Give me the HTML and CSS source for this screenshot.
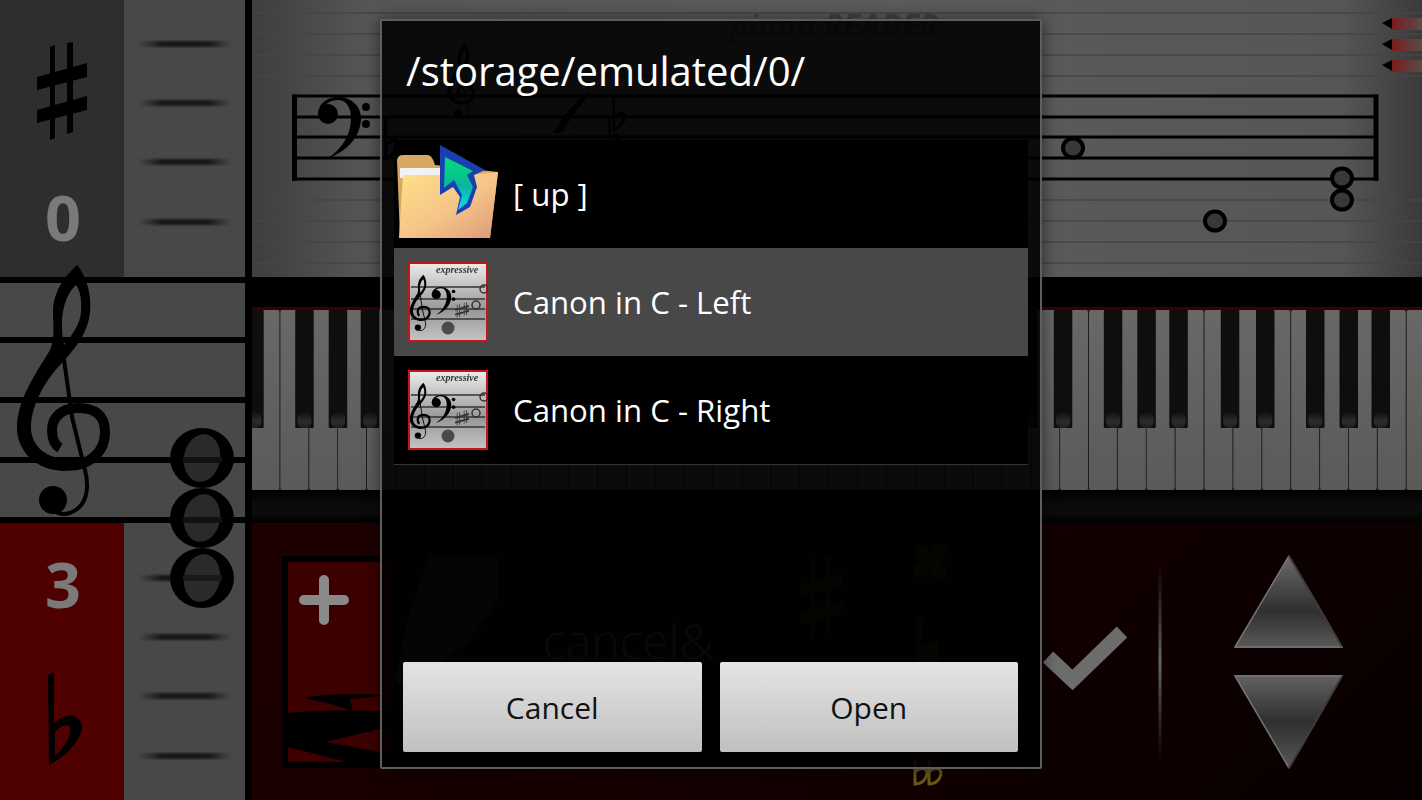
FILE: index.html
```html
<!DOCTYPE html>
<html lang="en">
<head>
<meta charset="utf-8">
<title>Open file</title>
<link rel="stylesheet" href="styles.css">
</head>
<body>
<svg class="defs" width="0" height="0" aria-hidden="true">
  <defs>
    <symbol id="treble" viewBox="0 260 120 262">
      <path fill-rule="evenodd" d="M77 265C86 275 92 295 90 312C88 335 72 352 60 365C44 382 32 405 31 425C30 445 45 458 66 459L66 471C35 471 17 450 17 428C17 400 35 375 50 350C55 340 53 325 53 310C54 290 66 275 77 265ZM76 285C68 292 63 305 62 320C62 330 62 338 64 345C72 335 80 325 81 312C82 300 80 290 76 285Z"/>
      <path fill="none" stroke="#000" stroke-width="10" d="M60 465C85 469 105 455 105 432C105 415 95 408 78 408C62 408 52 417 52 430C52 440 55 445 60 448"/>
      <path fill="none" stroke="#000" stroke-width="4" d="M62 345L72 417L85 470C90 490 86 506 72 512C66 515 60 514 56 512"/>
      <circle cx="53" cy="500" r="14"/>
    </symbol>
    <symbol id="bass" viewBox="316 95 58 66">
      <path d="M318 115C318 103 328 97 338 97C352 97 361 107 361 118C361 138 345 152 327 159C342 149 351 135 351 118C351 107 346 100 338 100C330 100 325 104 323 109Z"/>
      <circle cx="328" cy="114" r="10"/>
      <circle cx="366" cy="107" r="4"/>
      <circle cx="366" cy="124" r="4"/>
    </symbol>
    <symbol id="sharp" viewBox="0 0 50 98">
      <path d="M13 5L18 3V96L13 98ZM30 1L36 0V90L30 92ZM0 35L50 21V35L0 48ZM0 68L50 54V68L0 81Z"/>
    </symbol>
    <symbol id="flat" viewBox="0 0 34 94">
      <path fill-rule="evenodd" d="M0 3L6 0V52C12 45 20 42 26 44C33 47 36 55 32 63C26 76 13 87 1 93ZM7 60V84C15 77 23 66 22 56C20 50 12 54 7 60Z"/>
    </symbol>
    <linearGradient id="white-key" x1="0" y1="0" x2="0" y2="1">
      <stop offset="0" stop-color="#686868"/>
      <stop offset="1" stop-color="#5a5a58"/>
    </linearGradient>
    <linearGradient id="nub" x1="0" y1="0" x2="0" y2="1">
      <stop offset="0" stop-color="#111"/>
      <stop offset=".6" stop-color="#2c2c2c"/>
      <stop offset="1" stop-color="#1e1e1e"/>
    </linearGradient>
    <linearGradient id="tri" x1="0" y1="0" x2="0" y2="1">
      <stop offset="0" stop-color="#6c6c6c"/>
      <stop offset=".6" stop-color="#2f2f2f"/>
      <stop offset="1" stop-color="#5a5a5a"/>
    </linearGradient>
    <linearGradient id="tri-down" x1="0" y1="0" x2="0" y2="1">
      <stop offset="0" stop-color="#626262"/>
      <stop offset=".5" stop-color="#2f2f2f"/>
      <stop offset="1" stop-color="#585858"/>
    </linearGradient>
    <linearGradient id="fade-line" x1="0" y1="0" x2="0" y2="1">
      <stop offset="0" stop-color="#555" stop-opacity="0"/>
      <stop offset=".5" stop-color="#666"/>
      <stop offset="1" stop-color="#555" stop-opacity="0"/>
    </linearGradient>
    <linearGradient id="marker" x1="0" y1="0" x2="1" y2="0">
      <stop offset="0" stop-color="#7a1c1c"/>
      <stop offset="1" stop-color="#5a4a4a"/>
    </linearGradient>
    <linearGradient id="folder" x1="0" y1="0" x2="1" y2="1">
      <stop offset="0" stop-color="#ffe18a"/>
      <stop offset=".55" stop-color="#f4c487"/>
      <stop offset="1" stop-color="#dd9a78"/>
    </linearGradient>
    <linearGradient id="up-arrow" x1="0" y1="0" x2="0" y2="1">
      <stop offset="0" stop-color="#00e070"/>
      <stop offset=".55" stop-color="#0ab5a0"/>
      <stop offset="1" stop-color="#10d8f0"/>
    </linearGradient>
    <linearGradient id="sheet" x1="0" y1="0" x2="0" y2="1">
      <stop offset="0" stop-color="#ececec"/>
      <stop offset=".6" stop-color="#979797"/>
      <stop offset="1" stop-color="#c4c4c4"/>
    </linearGradient>
    <symbol id="file-icon" viewBox="0 0 80 80">
      <rect x="1" y="1" width="78" height="78" fill="url(#sheet)" stroke="#c81414" stroke-width="2"/>
      <text class="sheet-title" x="28" y="11">expressive</text>
      <path fill="none" stroke="#333" stroke-width="1.4" d="M3 25H77M3 37H77M3 47H77M3 57H77"/>
      <use href="#treble" x="-2" y="11" width="27" height="60"/>
      <use href="#bass" x="21" y="24" width="30" height="30"/>
      <circle cx="40" cy="66" r="6.5" fill="#4a4a4a"/>
      <ellipse cx="76" cy="27" rx="4" ry="4" fill="none" stroke="#333" stroke-width="1.5"/>
      <ellipse cx="68" cy="43" rx="4" ry="4" fill="none" stroke="#333" stroke-width="1.5"/>
      <use href="#sharp" x="47" y="42" width="7" height="14" fill="#333"/>
      <use href="#sharp" x="54" y="40" width="7" height="14" fill="#333"/>
    </symbol>
  </defs>
</svg>

<main class="app">
  <aside class="side">
    <section class="side-top">
      <div class="acc acc-sharp">
        <svg class="acc-glyph" width="50" height="98"><use href="#sharp"/></svg>
        <span class="acc-count">0</span>
      </div>
      <div class="dashes"><i></i><i></i><i></i><i></i></div>
    </section>
    <section class="side-staff"></section>
    <section class="side-bottom">
      <div class="acc acc-flat">
        <span class="acc-count">3</span>
        <svg class="acc-glyph" width="34" height="94"><use href="#flat"/></svg>
      </div>
      <div class="dashes dashes-low"><i></i><i></i><i></i><i></i></div>
    </section>
    <svg class="side-overlay" viewBox="0 0 245 800" aria-hidden="true">
      <use href="#treble" x="0" y="260" width="120" height="262"/>
      <g class="whole">
        <ellipse cx="202" cy="458" rx="32" ry="30"/>
        <ellipse cx="202" cy="518" rx="32" ry="30"/>
        <ellipse cx="202" cy="578" rx="32" ry="30"/>
        <ellipse class="hole" cx="202" cy="458" rx="18" ry="24" transform="rotate(10 202 458)"/>
        <ellipse class="hole" cx="202" cy="518" rx="18" ry="24" transform="rotate(10 202 518)"/>
        <ellipse class="hole" cx="202" cy="578" rx="18" ry="24" transform="rotate(10 202 578)"/>
        <path class="hole-lines" d="M183 460H222M183 520H222"/>
        <path class="hole-dash" d="M183 578H222"/>
      </g>
    </svg>
  </aside>

  <div class="rule"></div>

  <div class="stage">
    <section class="score">
      <span class="logo">piano READER</span>
      <svg class="canvas" viewBox="252 0 1170 277" aria-hidden="true">
        <path class="ledger" d="M252 13H1422M252 34H1422M252 55H1422M252 76H1422M252 200H1422M252 221H1422M252 242H1422M252 263H1422"/>
        <path class="staff" d="M292 96H1378M292 117H1378M292 137H1378M292 158H1378M292 179H1378"/>
        <path class="bars" d="M294.5 94.5V181M1376 94.5V181"/>
        <use href="#bass" x="316" y="95" width="58" height="66"/>
        <use href="#flat" x="384" y="118" width="16" height="44"/>
        <use href="#treble" x="442" y="42" width="36" height="78"/>
        <path d="M553 133C565 115 575 100 590 91L585 100C575 112 566 125 562 133Z"/>
        <use href="#flat" x="612" y="93" width="15" height="40"/>
        <use href="#flat" x="608" y="118" width="13" height="34"/>
        <g class="note">
          <ellipse cx="1073" cy="148" rx="10" ry="9.5"/>
          <ellipse cx="1215" cy="221" rx="10" ry="9.5"/>
          <ellipse cx="1342" cy="178" rx="10" ry="9.5"/>
          <ellipse cx="1342" cy="200" rx="10" ry="9.5"/>
        </g>
        <g>
          <path d="M1382 23L1392 18V29Z"/><rect x="1392" y="18" width="30" height="12" fill="url(#marker)"/>
          <path d="M1382 44L1392 39V50Z"/><rect x="1392" y="39" width="30" height="12" fill="url(#marker)"/>
          <path d="M1382 65L1392 60V71Z"/><rect x="1392" y="60" width="30" height="12" fill="url(#marker)"/>
        </g>
      </svg>
    </section>
    <div class="strip-top"></div>
    <svg class="keys" viewBox="252 310 1170 180" aria-hidden="true">
      <defs>
        <g id="octave">
          <g fill="url(#white-key)">
            <rect x="0.5" width="27.9" height="180" rx="2"/>
            <rect x="29.4" width="27.9" height="180" rx="2"/>
            <rect x="58.3" width="27.9" height="180" rx="2"/>
            <rect x="87.1" width="27.9" height="180" rx="2"/>
            <rect x="116" width="27.9" height="180" rx="2"/>
            <rect x="144.9" width="27.9" height="180" rx="2"/>
            <rect x="173.8" width="27.9" height="180" rx="2"/>
          </g>
          <g class="black-key">
            <rect x="-5.8" width="18.5" height="118" rx="1"/>
            <rect x="44.2" width="18.5" height="118" rx="1"/>
            <rect x="77.7" width="18.5" height="118" rx="1"/>
            <rect x="109.7" width="18.5" height="118" rx="1"/>
            <rect x="161.2" width="18.5" height="118" rx="1"/>
          </g>
          <g fill="url(#nub)">
            <rect x="-3.5" y="102" width="14" height="16" rx="6"/>
            <rect x="46.5" y="102" width="14" height="16" rx="6"/>
            <rect x="80" y="102" width="14" height="16" rx="6"/>
            <rect x="112" y="102" width="14" height="16" rx="6"/>
            <rect x="163.5" y="102" width="14" height="16" rx="6"/>
          </g>
        </g>
      </defs>
      <rect x="252" y="310" width="1170" height="180" fill="#1c1c1c"/>
      <use href="#octave" x="251" y="310"/>
      <use href="#octave" x="453.2" y="310"/>
      <use href="#octave" x="655.3" y="310"/>
      <use href="#octave" x="857.5" y="310"/>
      <use href="#octave" x="1059.6" y="310"/>
      <use href="#octave" x="1261.8" y="310"/>
    </svg>
    <div class="strip-bottom"></div>
    <section class="controls">
      <span class="ghost-label">cancel&amp;</span>
      <svg class="canvas" viewBox="252 523 1170 277" aria-hidden="true">
        <rect class="plus-box" x="285" y="559" width="112" height="206"/>
        <path class="plus soft" d="M324 580V620M304 600H344"/>
        <path d="M305 698C325 693 360 694 390 695L350 699L353 712C340 705 320 702 305 698Z"/>
        <path d="M288 713C320 710 345 710 397 712V725L325 742L397 755V768H288Z"/>
        <path class="red-cut" d="M288 747L347 762H288Z"/>
        <path class="pen" d="M430 556H497V600L470 640L405 690L395 680L410 610Z"/>
        <g class="gold">
          <use href="#sharp" x="800" y="553" width="42" height="88"/>
          <path d="M914 545H925L929 552L933 545H946V556L939 561L946 567V578H933L929 570L925 578H914V567L921 561L914 556Z"/>
          <path d="M917 618H922V645L938 640V700H933V672L917 677Z"/>
          <path class="gold-line" d="M915 760V784C922 784 927 779 927 772C925 767 919 768 915 772M929 760V784C936 784 941 779 941 772C939 767 933 768 929 772"/>
        </g>
        <path class="check soft" d="M1048 657L1072.5 680L1122 632"/>
        <rect class="soft" x="1158.5" y="562" width="3" height="200" fill="url(#fade-line)"/>
        <path fill="url(#tri)" d="M1289 555L1343 648H1234Z"/>
        <path class="edge-light" d="M1289 556L1235 647H1343"/>
        <path class="edge-dark" d="M1289 556L1342 647"/>
        <path fill="url(#tri-down)" d="M1234 675H1343L1289 769Z"/>
        <path class="edge-light" d="M1342 676H1235L1289 768"/>
        <path class="edge-dark" d="M1342 676L1289 768"/>
      </svg>
    </section>
  </div>

  <section class="dialog">
    <h1 class="dialog-title">/storage/emulated/0/</h1>
    <ul class="files">
      <li class="file">
        <span class="file-slot">
          <svg class="folder" width="119" height="108" viewBox="394 140 119 108" aria-hidden="true">
            <path fill="#d9a860" d="M397 160Q398 155 403 155H428Q432 155 435 165L498 172L490 238H400Z"/>
            <path fill="#f2f2f2" d="M400 168H445V178H400Z"/>
            <path fill="url(#folder)" d="M403 175H470L498 172L490 238H399Z"/>
            <path fill="#1a3fb0" d="M440 145L485 170L474 175L477 187L470 207L456 215L460 197L453 187L440 195Z"/>
            <path fill="url(#up-arrow)" d="M445 157L473 171L467 175L473 187L467 203L458 210L462 195L454 180L444 188Z"/>
          </svg>
        </span>
        <span class="file-name">[ up ]</span>
      </li>
      <li class="file is-selected">
        <span class="file-slot"><svg class="sheet-icon" width="80" height="80"><use href="#file-icon"/></svg></span>
        <span class="file-name">Canon in C - Left</span>
      </li>
      <li class="file">
        <span class="file-slot"><svg class="sheet-icon" width="80" height="80"><use href="#file-icon"/></svg></span>
        <span class="file-name">Canon in C - Right</span>
      </li>
    </ul>
    <div class="actions">
      <button class="action" type="button">Cancel</button>
      <button class="action" type="button">Open</button>
    </div>
  </section>
</main>
</body>
</html>
```
FILE: styles.css
```css
* { box-sizing: border-box; }
html, body { margin: 0; padding: 0; background: #000; }
.defs { position: absolute; }
.app {
  position: relative;
  display: flex;
  width: 1422px;
  height: 800px;
  overflow: hidden;
  font-family: "Open Sans", "Noto Sans", sans-serif;
}

/* left column */
.side { position: relative; flex: 0 0 245px; display: flex; flex-direction: column; }
.side-top, .side-bottom { display: flex; flex: 0 0 277px; background: #484848; }
.side-staff {
  flex: 0 0 246px;
  background: repeating-linear-gradient(#000 0 6px, #484848 6px 60px);
}
.acc {
  flex: 0 0 124px;
  display: flex;
  flex-direction: column;
  align-items: center;
}
.acc-sharp { background: #2e2e2e; padding-top: 42px; }
.acc-flat { background: #4f0000; padding-top: 25px; }
.acc-glyph { display: block; }
.acc-flat .acc-glyph { margin: 52px 0 0 6px; }
.acc-count {
  padding-left: 2px;
  font-weight: 700;
  font-size: 63px;
  line-height: 72px;
  color: #7a7a7a;
}
.acc-sharp .acc-count { margin-top: 41px; }
.dashes {
  flex: 1;
  display: flex;
  flex-direction: column;
  gap: 53.2px;
  padding-top: 41px;
  align-items: center;
}
.dashes-low { padding-top: 52px; }
.dashes i {
  display: block;
  width: 92px;
  height: 6px;
  background: linear-gradient(to right, rgba(24, 24, 24, 0), #181818 25%, #181818 75%, rgba(24, 24, 24, 0));
  filter: blur(1.2px);
}
.side-overlay { position: absolute; left: 0; top: 0; width: 245px; height: 800px; }
.whole ellipse { fill: #000; }
.whole .hole { fill: #2a2a2a; }
.hole-lines { fill: none; stroke: #111; stroke-width: 6; }
.hole-dash { fill: none; stroke: #191919; stroke-width: 6; }

.rule { flex: 0 0 7px; background: #000; }

/* right stage */
.stage { flex: 1; display: flex; flex-direction: column; min-width: 0; }
.score {
  position: relative;
  flex: 0 0 277px;
  background: linear-gradient(to right, #3e3e3e 0, #565656 10%, #5b5b5b 55%, #565656 93%, #3a3a3a 100%);
}
.canvas { position: absolute; left: 0; top: 0; width: 100%; height: 100%; overflow: hidden; }
.logo {
  position: absolute;
  left: 478px;
  top: 6px;
  font-size: 31px;
  line-height: 36px;
  font-weight: 700;
  font-style: italic;
  letter-spacing: .5px;
  color: #444;
  white-space: nowrap;
}
.ledger { fill: none; stroke: #464646; stroke-width: 1.5; }
.staff { fill: none; stroke: #000; stroke-width: 3; }
.bars { fill: none; stroke: #000; stroke-width: 5; }
.note ellipse { fill: #383838; stroke: #000; stroke-width: 4; filter: blur(.5px); }
.strip-top { flex: 0 0 33px; background: #000; border-bottom: 3px solid #3a0000; }
.keys { display: block; flex: 0 0 180px; width: 100%; height: 180px; }
.black-key { fill: #0e0e0e; }
.strip-bottom {
  flex: 0 0 33px;
  background: linear-gradient(#000 0, #0b0b0b 45%, #0b0b0b 70%, #000 100%);
}
.controls {
  position: relative;
  flex: 1;
  background: linear-gradient(135deg, #1f0000 0, #160000 40%, #080000 100%);
}
.ghost-label {
  position: absolute;
  left: 291px;
  top: 90px;
  font-size: 48px;
  line-height: 56px;
  font-weight: 300;
  color: #484848;
}
.soft { filter: blur(.6px); }
.plus-box { fill: #3c0000; stroke: #000; stroke-width: 6; }
.red-cut { fill: #3c0000; }
.plus { fill: none; stroke: #8a8a8a; stroke-width: 10; stroke-linecap: round; }
.pen { fill: #2c2c2c; }
.gold { fill: #2e2508; }
.gold-line { fill: none; stroke: #6b5818; stroke-width: 3; }
.check { fill: none; stroke: #6c6c6c; stroke-width: 15; }
.edge-light { fill: none; stroke: #747474; stroke-width: 1.5; }
.edge-dark { fill: none; stroke: #3c3c3c; stroke-width: 2; }

/* dialog */
.dialog {
  position: absolute;
  left: 380px;
  top: 19px;
  width: 662px;
  height: 750px;
  display: flex;
  flex-direction: column;
  border: 2px solid #5e5e5e;
  border-radius: 2px;
  background: rgba(0, 0, 0, .88);
  box-shadow: 0 0 16px rgba(0, 0, 0, .55);
}
.dialog-title {
  flex: 0 0 119px;
  margin: 0;
  padding: 20px 0 0 24px;
  font-size: 40px;
  line-height: 60px;
  font-weight: 400;
  color: #fff;
}
.files { margin: 0 12px; padding: 0; list-style: none; background: #000; border-bottom: 1px solid #333; }
.file { display: flex; align-items: center; height: 108px; color: #fff; }
.is-selected { background: #484848; }
.file-slot { flex: 0 0 119px; display: flex; justify-content: center; padding-right: 11px; }
.file:first-child .file-slot { padding-right: 0; }
.file-slot svg { display: block; }
.folder { filter: blur(.5px); }
.sheet-icon { filter: blur(.4px); }
.file-name { font-size: 31.2px; line-height: 40px; }
.sheet-title { font: italic 700 10px "Liberation Serif", serif; fill: #333; }
.actions { margin-top: auto; display: flex; gap: 18px; padding: 0 22px 15px 21px; }
.action {
  flex: 1;
  height: 90px;
  border: 0;
  border-radius: 2px;
  background: linear-gradient(#e4e4e4, #c0c0c0);
  color: #111;
  font: 400 30px "Open Sans", "Noto Sans", sans-serif;
}
```
